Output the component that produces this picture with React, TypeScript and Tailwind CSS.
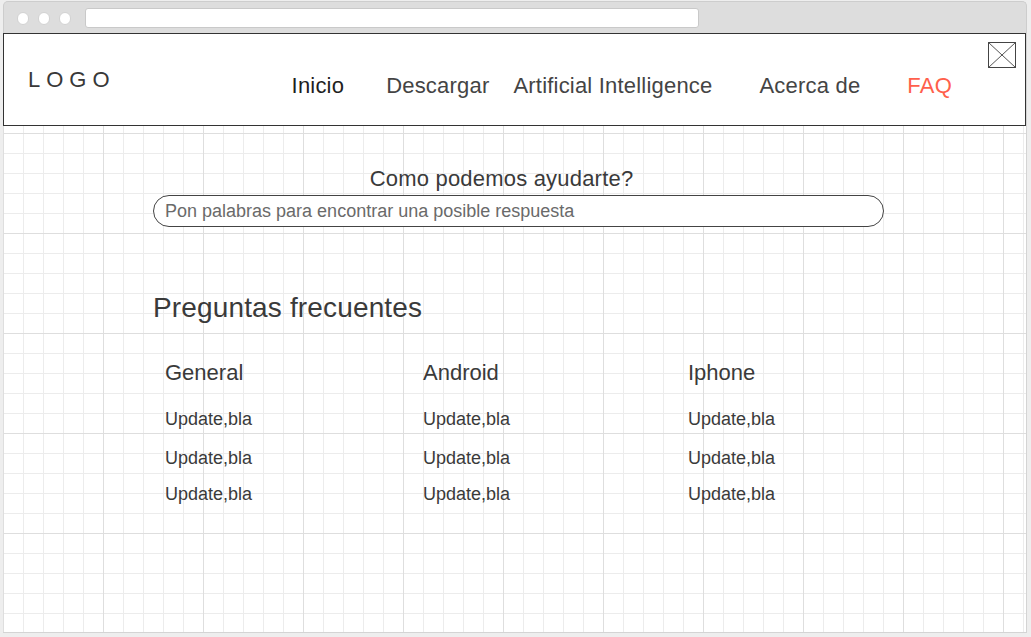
const navItems = [
  { label: "Inicio", cls: "ml-[176px] text-[#1f1f1f]" },
  { label: "Descargar", cls: "ml-[42px] text-[#444]" },
  { label: "Artificial Intelligence", cls: "ml-[24px] text-[#444]" },
  { label: "Acerca de", cls: "ml-[47px] text-[#444]" },
  { label: "FAQ", cls: "ml-[47px] text-[#ff5f4c]" },
]

const columns = [
  { title: "General", items: ["Update,bla", "Update,bla", "Update,bla"] },
  { title: "Android", items: ["Update,bla", "Update,bla", "Update,bla"] },
  { title: "Iphone", items: ["Update,bla", "Update,bla", "Update,bla"] },
]

function BrowserBar() {
  return (
    <div className="relative h-[32px] rounded-t-[5px] border-x border-t border-[#cdcdcd] bg-[#dddddd]">
      <div className="flex gap-[9px] pl-[13px] pt-[10px]">
        <span className="h-[13px] w-[12px] rounded-full border border-[#d2d2d2] bg-white" />
        <span className="h-[13px] w-[12px] rounded-full border border-[#d2d2d2] bg-white" />
        <span className="h-[13px] w-[12px] rounded-full border border-[#d2d2d2] bg-white" />
      </div>
      <div className="absolute left-[81px] top-[6px] h-[20px] w-[614px] rounded-[3px] border border-[#c9c9c9] bg-white" />
    </div>
  )
}

function CloseBox() {
  return (
    <svg width="28" height="26" viewBox="0 0 28 26" className="mr-[9px] mt-[8px] ml-auto">
      <rect x="0.5" y="0.5" width="27" height="25" fill="white" stroke="#444" />
      <line x1="0.5" y1="0.5" x2="27.5" y2="25.5" stroke="#555" />
      <line x1="27.5" y1="0.5" x2="0.5" y2="25.5" stroke="#555" />
    </svg>
  )
}

function Header() {
  return (
    <header className="flex h-[93px] items-start border border-[#333] bg-white">
      <div className="ml-[24px] mt-[35px] text-[22px] leading-[22px] tracking-[6px] text-[#383838]">LOGO</div>
      <nav className="mt-[41px] flex text-[22px] leading-[22px] tracking-[0.2px]">
        {navItems.map((n) => (
          <a key={n.label} className={n.cls}>
            {n.label}
          </a>
        ))}
      </nav>
      <CloseBox />
    </header>
  )
}

export default function App() {
  return (
    <div
      className="h-[637px] w-[1031px] overflow-hidden bg-[#eeeeee] pl-[3px] pt-[1px] text-[#3a3a3a]"
      style={{ fontFamily: '"Liberation Sans", Arial, sans-serif' }}
    >
      <div className="w-[1024px]">
        <BrowserBar />
        <div className="h-[600px] border-b border-r border-[#d4d4d4] bg-white bg-[linear-gradient(to_right,#dedede_1px,transparent_1px),linear-gradient(to_bottom,#dedede_1px,transparent_1px),linear-gradient(to_right,#ececec_1px,transparent_1px),linear-gradient(to_bottom,#ececec_1px,transparent_1px)] bg-[size:100px_100px,100px_100px,20px_20px,20px_20px]">
          <Header />

          <main className="pl-[150px]">
            <section className="w-[731px]">
              <h2 className="mt-[42px] pr-[34px] text-center text-[22px] leading-[22px] tracking-[0.2px] text-[#3a3a3a]">
                Como podemos ayudarte?
              </h2>
              <input
                className="mt-[5px] block h-[32px] w-full rounded-full border border-[#444] bg-white pl-[11px] text-[18px] text-[#333] outline-none placeholder:text-[#6a6a6a]"
                placeholder="Pon palabras para encontrar una posible respuesta"
              />
            </section>

            <h1 className="mt-[67px] text-[28px] leading-[28px] tracking-[0.15px] text-[#3a3a3a]">Preguntas frecuentes</h1>

            <div className="mt-[40px] grid grid-cols-[258px_265px_200px] pl-[12px]">
              {columns.map((c) => (
                <div key={c.title} className="flex flex-col">
                  <h3 className="text-[22px] leading-[22px] text-[#3a3a3a]">{c.title}</h3>
                  <ul className="mt-[26px] flex flex-col text-[18px] leading-[18px] text-[#3a3a3a]">
                    <li>{c.items[0]}</li>
                    <li className="mt-[21px]">{c.items[1]}</li>
                    <li className="mt-[18px]">{c.items[2]}</li>
                  </ul>
                </div>
              ))}
            </div>
          </main>
        </div>
      </div>
    </div>
  )
}
